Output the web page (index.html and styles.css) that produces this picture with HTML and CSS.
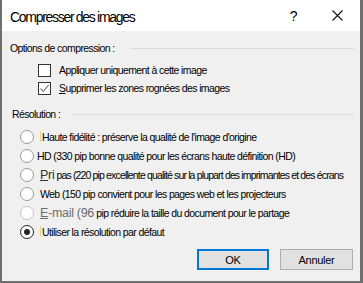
FILE: index.html
```html
<!DOCTYPE html>
<html lang="fr">
<head>
    <meta charset="UTF-8">
    <title>Compresser des images</title>
    <link rel="stylesheet" href="styles.css">
</head>
<body>
    <div class="dialog">
        <div class="titlebar">
            <span class="title">Compresser des images</span>
            <span class="help">?</span>
            <svg class="close" width="11" height="11" viewBox="0 0 11 11">
                <path d="M0.5 0.5 L10.5 10.5 M10.5 0.5 L0.5 10.5" stroke="#111" stroke-width="1.1" fill="none"/>
            </svg>
        </div>

        <div class="content">
            <div class="group-head">
                <span>Options de compression :</span>
                <span class="rule"></span>
            </div>
            <div class="check-list">
                <div class="check-row">
                    <span class="box"></span>
                    <span>Appliquer uniquement à cette image</span>
                </div>
                <div class="check-row">
                    <span class="box">
                        <svg width="11" height="11" viewBox="0 0 11 11">
                            <path d="M1.5 5.5 L4.2 8.5 L9.8 1.8" stroke="#444" stroke-width="1" fill="none"/>
                        </svg>
                    </span>
                    <span><u class="key">S</u>upprimer les zones rognées des images</span>
                </div>
            </div>

            <div class="group-head res-head">
                <span>Résolution :</span>
                <span class="rule"></span>
            </div>
            <ul class="radio-list">
                <li class="radio-row"><span class="dot"></span><span class="txt shift"><i class="caret"></i>Haute fidélité : préserve la qualité de l'image d'origine</span></li>
                <li class="radio-row"><span class="dot"></span><span class="txt">HD (330 pip bonne qualité pour les écrans haute définition (HD)</span></li>
                <li class="radio-row"><span class="dot"></span><span class="txt shift tight"><span class="big"><u>P</u>ri</span> pas (220 pip excellente qualité sur la plupart des imprimantes et des écrans</span></li>
                <li class="radio-row"><span class="dot"></span><span class="txt shift">Web (150 pip convient pour les pages web et les projecteurs</span></li>
                <li class="radio-row disabled"><span class="dot"></span><span class="txt shift"><span class="big grey"><u>E</u>-mail (96</span> pip réduire la taille du document pour le partage</span></li>
                <li class="radio-row selected"><span class="dot"></span><span class="txt shift"><i class="caret"></i>Utiliser la résolution par défaut</span></li>
            </ul>

            <div class="buttons">
                <button class="btn default">OK</button>
                <button class="btn">Annuler</button>
            </div>
        </div>
    </div>
</body>
</html>
```

FILE: styles.css
```css
body {
    margin: 0;
    background: #6f6f6f;
    font-family: "Liberation Sans", Arial, sans-serif;
    font-size: 10.5px;
    letter-spacing: -0.6px;
    color: #000;
}

.dialog {
    width: 358px;
    height: 281px;
    margin-left: 2px;
    background: #f0f0f0;
    overflow: hidden;
}

.titlebar {
    height: 31px;
    background: #fff;
    display: flex;
    align-items: center;
    padding-left: 8px;
}
.title { font-size: 14px; letter-spacing: -1.3px; flex: 1; margin-top: 2px; }
.help { font-size: 14px; margin-right: 35px; margin-top: 1px; }
.close { margin-right: 17px; }

.content { padding: 9px 6px 0 8px; }

.group-head {
    display: flex;
    align-items: center;
    height: 16px;
}
.rule {
    flex: 1;
    height: 1px;
    background: #dadada;
    margin-left: 15px;
}
.res-head { margin-top: 9px; padding-left: 2px; }
.res-head .rule { margin-left: 13px; }

.check-list { padding-left: 28px; margin-top: 5px; }
.check-row {
    display: flex;
    align-items: center;
    height: 18px;
}
.box {
    width: 11px;
    height: 11px;
    border: 1px solid #333;
    background: #fff;
    margin-right: 8px;
    display: flex;
}
.key { text-decoration-thickness: 1px; }

.radio-list {
    list-style: none;
    margin: 5px 0 0 0;
    padding: 0 0 0 10px;
}
.radio-row {
    display: flex;
    align-items: center;
    height: 19px;
}
.dot {
    width: 12px;
    height: 12px;
    border: 1px solid #9a9a9a;
    border-radius: 50%;
    background: #fff;
    margin-right: 3px;
    position: relative;
    flex: none;
}
.txt { white-space: nowrap; }
.txt.shift { margin-left: 3px; }
.txt.tight { letter-spacing: -0.85px; }
.caret {
    display: inline-block;
    width: 1px;
    height: 11px;
    background: #e8d48a;
    vertical-align: -1px;
    margin-right: 1px;
}
.big { font-size: 12.5px; letter-spacing: -0.3px; color: #333; }
.grey { color: #6d6d6d; }
.disabled .dot { border-color: #c4c4c4; }
.selected .dot { border-color: #222; }
.selected .dot::after {
    content: "";
    position: absolute;
    left: 3px;
    top: 3px;
    width: 6px;
    height: 6px;
    border-radius: 50%;
    background: #222;
}

.buttons {
    display: flex;
    justify-content: flex-end;
    gap: 11px;
    margin-top: 8px;
    padding-right: 1px;
}
.btn {
    width: 73px;
    height: 21px;
    font-family: inherit;
    font-size: 11px;
    letter-spacing: -0.3px;
    background: #e1e1e1;
    border: 1px solid #adadad;
    padding: 0;
}
.btn.default {
    width: 72px;
    border: 2px solid #0078d7;
}
```
